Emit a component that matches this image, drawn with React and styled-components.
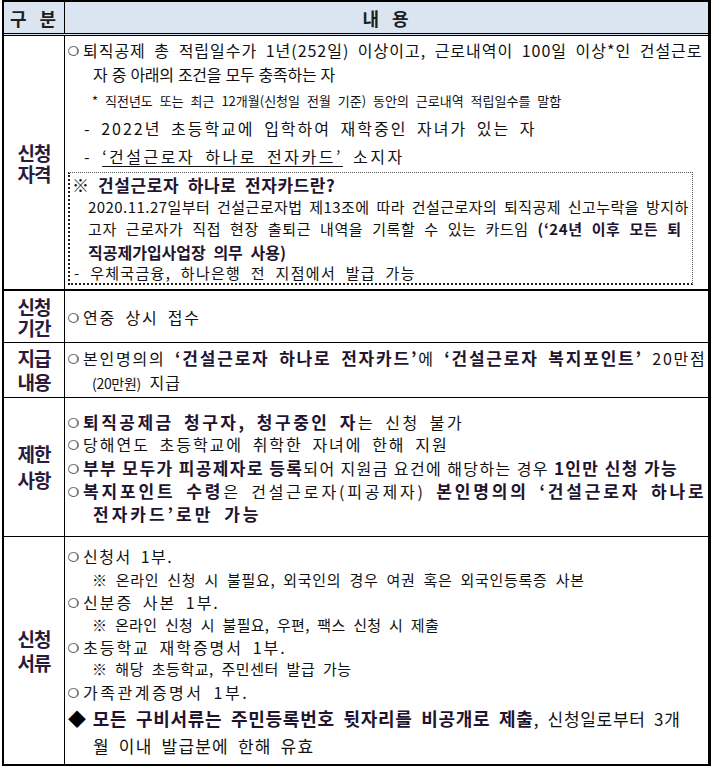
import React from 'react';
import styled, { createGlobalStyle } from 'styled-components';

const GlobalStyle = createGlobalStyle`
  body {
    margin: 0;
    background: #fff;
    font-family: "Noto Sans CJK KR", "Noto Sans", sans-serif;
    color: #111;
  }
`;

const Frame = styled.div`
  width: 709px;
  margin-left: 2px;
  border-top: 2px solid #000;
  border-left: 2px solid #000;
  border-right: 3px solid #000;
  border-bottom: 2px solid #000;
  box-sizing: border-box;
`;

const Row = styled.div`
  display: grid;
  grid-template-columns: 61px 1fr;
  height: ${({ $h }) => $h}px;
  box-sizing: border-box;
  border-bottom: ${({ $b }) => $b || '1px solid #000'};
`;

const HeadRow = styled(Row)`
  background: #dbe5f1;
`;

const HeadCell = styled.div`
  display: flex;
  align-items: center;
  justify-content: center;
  font-size: 18px;
  font-weight: 700;
  letter-spacing: 2px;
  word-spacing: 5px;
  color: #1e1e1e;
  border-right: ${({ $last }) => ($last ? 'none' : '1px solid #000')};
`;

const Label = styled.div`
  display: flex;
  flex-direction: column;
  align-items: center;
  justify-content: center;
  border-right: 1px solid #000;
  font-size: 19px;
  font-weight: 700;
  letter-spacing: -1px;
  color: #2a1a3c;
  line-height: ${({ $lh }) => $lh || 22}px;
`;

const Content = styled.div`
  display: flex;
  flex-direction: column;
  justify-content: ${({ $top }) => ($top ? 'flex-start' : 'center')};
  padding: ${({ $pt }) => $pt || 0}px 0 0 3px;
  overflow: hidden;
  white-space: nowrap;
`;

const Line = styled.div`
  height: ${({ $h }) => $h || 23}px;
  line-height: ${({ $h }) => $h || 23}px;
  font-size: ${({ $size }) => $size || 16}px;
  letter-spacing: ${({ $ls }) => $ls || 0}px;
  word-spacing: ${({ $ws }) => ($ws === undefined ? 4 : $ws)}px;
  padding-left: ${({ $indent }) => $indent || 0}px;
`;

const Dot = styled.span`
  display: inline-block;
  width: 8px;
  height: 8px;
  border: 1px solid #7a7a7a;
  border-right-width: 2px;
  border-bottom-color: #555;
  border-radius: 50%;
  margin-right: 4px;
  vertical-align: 1px;
  letter-spacing: 0;
`;

const B = styled.b`
  font-weight: 700;
  color: #22142f;
  font-size: ${({ $size }) => $size || 17}px;
`;

const Small = styled.span`
  font-size: 14px;
  letter-spacing: -0.3px;
`;

const U = styled.span`
  text-decoration: underline;
  text-underline-offset: 3px;
`;

const NoteBox = styled.div`
  margin: 1px 0 0 0;
  width: 622px;
  border-top: 1px dotted #555;
  border-right: 1px dotted #555;
  border-left: 2px dotted #222;
  border-bottom: 2px dotted #222;
  overflow: hidden;
`;

const Diamond = styled.span`
  font-size: 18px;
  margin-right: 6px;
  color: #000;
`;

export default function App() {
  return (
    <>
      <GlobalStyle />
      <Frame>
        <HeadRow $h={34} $b="3px double #000">
          <HeadCell>구 분</HeadCell>
          <HeadCell $last>내 용</HeadCell>
        </HeadRow>

        <Row $h={255} $b="2px solid #000">
          <Label $lh={21}>
            <span>신청</span>
            <span>자격</span>
          </Label>
          <Content $top $pt={2}>
            <Line $h={24} $ls={0.98}>
              <Dot />퇴직공제 총 적립일수가 1년(252일) 이상이고, 근로내역이 100일 이상*인 건설근로
            </Line>
            <Line $h={25} $indent={25} $ls={-0.3} $ws={1}>
              자 중 아래의 조건을 모두 충족하는 자
            </Line>
            <Line $h={27} $indent={24} $size={13}>
              * 직전년도 또는 최근 12개월(신청일 전월 기준) 동안의 근로내역 적립일수를 말함
            </Line>
            <Line $h={28} $indent={16} $ls={2}>
              - 2022년 초등학교에 입학하여 재학중인 자녀가 있는 자
            </Line>
            <Line $h={29} $indent={16} $ls={2.5}>
              - <U>‘건설근로자 하나로 전자카드’</U> 소지자
            </Line>
            <NoteBox>
              <Line $h={24} $indent={2} $ls={0.6}>
                <B $size={17}>※ 건설근로자 하나로 전자카드란?</B>
              </Line>
              <Line $h={20} $indent={18} $size={15} $ls={0.45} $ws={3}>
                2020.11.27일부터 건설근로자법 제13조에 따라 건설근로자의 퇴직공제 신고누락을 방지하
              </Line>
              <Line $h={24} $indent={18} $size={15} $ls={0.6} $ws={5}>
                고자 근로자가 직접 현장 출퇴근 내역을 기록할 수 있는 카드임 <B $size={15}>(‘24년 이후 모든 퇴</B>
              </Line>
              <Line $h={22} $indent={18} $size={15}>
                <B $size={16}>직공제가입사업장 의무 사용)</B>
              </Line>
              <Line $h={20} $indent={4} $size={15} $ls={1.3} $ws={5}>
                - 우체국금융, 하나은행 전 지점에서 발급 가능
              </Line>
            </NoteBox>
          </Content>
        </Row>

        <Row $h={52}>
          <Label $lh={21}>
            <span>신청</span>
            <span>기간</span>
          </Label>
          <Content>
            <Line $h={24} $ls={1.8}>
              <Dot />연중 상시 접수
            </Line>
          </Content>
        </Row>

        <Row $h={55}>
          <Label $lh={24}>
            <span>지급</span>
            <span>내용</span>
          </Label>
          <Content>
            <Line $h={24} $ls={1.8}>
              <Dot />본인명의의 <B>‘건설근로자 하나로 전자카드’</B>에 <B>‘건설근로자 복지포인트’</B> 20만점
            </Line>
            <Line $h={24} $indent={24} $ls={1}>
              <Small>(20만원)</Small> 지급
            </Line>
          </Content>
        </Row>

        <Row $h={139}>
          <Label $lh={26}>
            <span>제한</span>
            <span>사항</span>
          </Label>
          <Content>
            <Line $h={23} $ls={2.5}>
              <Dot /><B>퇴직공제금 청구자, 청구중인 자</B>는 신청 불가
            </Line>
            <Line $h={23} $ls={2}>
              <Dot />당해연도 초등학교에 취학한 자녀에 한해 지원
            </Line>
            <Line $h={23} $ls={1.4} $ws={0}>
              <Dot /><B>부부 모두가 피공제자로 등록</B>되어 지원금 요건에 해당하는 경우 <B>1인만 신청 가능</B>
            </Line>
            <Line $h={23} $ls={2.85}>
              <Dot /><B>복지포인트 수령</B>은 건설근로자(피공제자) <B>본인명의의 ‘건설근로자 하나로</B>
            </Line>
            <Line $h={23} $indent={25} $ls={3}>
              <B>전자카드’로만 가능</B>
            </Line>
          </Content>
        </Row>

        <Row $h={227} $b="none">
          <Label $lh={24}>
            <span>신청</span>
            <span>서류</span>
          </Label>
          <Content $top $pt={8}>
            <Line $h={23} $ls={1.5}>
              <Dot />신청서 1부.
            </Line>
            <Line $h={23} $indent={24} $size={15} $ls={0.7}>
              ※ 온라인 신청 시 불필요, 외국인의 경우 여권 혹은 외국인등록증 사본
            </Line>
            <Line $h={23} $ls={2}>
              <Dot />신분증 사본 1부.
            </Line>
            <Line $h={22} $indent={24} $size={15} $ls={0.3}>
              ※ 온라인 신청 시 불필요, 우편, 팩스 신청 시 제출
            </Line>
            <Line $h={22} $ls={2}>
              <Dot />초등학교 재학증명서 1부.
            </Line>
            <Line $h={22} $indent={24} $size={15} $ls={0.5}>
              ※ 해당 초등학교, 주민센터 발급 가능
            </Line>
            <Line $h={25} $ls={2.5}>
              <Dot />가족관계증명서 1부.
            </Line>
            <Line $h={27} $size={17} $ls={0.7}>
              <Diamond>◆</Diamond>
              <B $size={18}>모든 구비서류는 주민등록번호 뒷자리를 비공개로 제출</B>, 신청일로부터 3개
            </Line>
            <Line $h={27} $indent={25} $size={17} $ls={1.2}>
              월 이내 발급분에 한해 유효
            </Line>
          </Content>
        </Row>
      </Frame>
    </>
  );
}
